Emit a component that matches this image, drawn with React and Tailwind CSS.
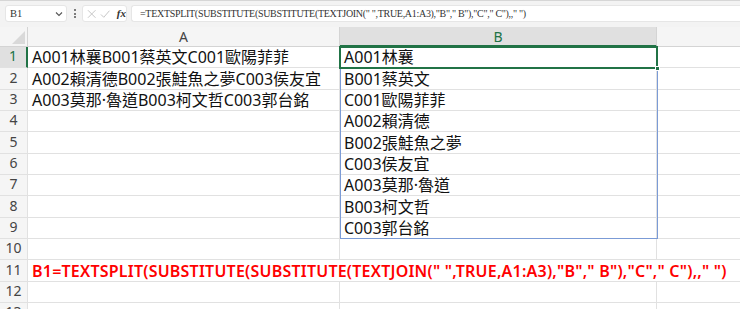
import React from "react";

const CJK = '"Noto Sans", "Noto Sans CJK TC", sans-serif';

const colA = [
  "A001林襄B001蔡英文C001歐陽菲菲",
  "A002賴清德B002張鮭魚之夢C003侯友宜",
  "A003莫那·魯道B003柯文哲C003郭台銘",
];
const colB = [
  "A001林襄",
  "B001蔡英文",
  "C001歐陽菲菲",
  "A002賴清德",
  "B002張鮭魚之夢",
  "C003侯友宜",
  "A003莫那·魯道",
  "B003柯文哲",
  "C003郭台銘",
];
const formula =
  '=TEXTSPLIT(SUBSTITUTE(SUBSTITUTE(TEXTJOIN(" ",TRUE,A1:A3),"B"," B"),"C"," C"),," ")';

function Row({ n }) {
  const sel = n === 1;
  const a = colA[n - 1] || "";
  const b = colB[n - 1] || "";
  if (n === 11) {
    return (
      <div className="flex h-[21.33px]">
        <div className="w-[28px] shrink-0 flex items-end justify-center pb-[1px] bg-[#f5f5f5] border-r border-b border-[#e1e1e1] text-[14px] text-[#444]">
          {n}
        </div>
        <div className="flex-1 flex items-end pl-[4px] border-b border-[#e1e1e1] text-[16px] leading-[20px] text-[#ff0000] font-semibold whitespace-nowrap tracking-[0.22px]">
          B1{formula}
        </div>
      </div>
    );
  }
  return (
    <div className="flex h-[21.33px]">
      <div
        className={
          sel
            ? "w-[28px] shrink-0 flex items-end justify-center pb-[1px] bg-[#e0e0e0] border-r-2 border-b border-r-[#217346] border-b-[#e1e1e1] text-[14px] text-[#217346]"
            : "w-[28px] shrink-0 flex items-end justify-center pb-[1px] bg-[#f5f5f5] border-r border-b border-[#e1e1e1] text-[14px] text-[#444]"
        }
      >
        {n}
      </div>
      <div className="w-[312px] shrink-0 flex items-end pl-[4px] border-r border-b border-[#e1e1e1] text-[16px] leading-[20px] text-[#111] whitespace-nowrap">
        {a}
      </div>
      <div className="w-[317px] shrink-0 flex items-end pl-[4px] border-r border-b border-[#e1e1e1] text-[16px] leading-[20px] text-[#111] whitespace-nowrap">
        {b}
      </div>
      <div className="flex-1 border-b border-[#e1e1e1]" />
    </div>
  );
}

export default function App() {
  return (
    <div
      className="w-[740px] h-[309px] overflow-hidden bg-white relative"
      style={{ fontFamily: CJK }}
    >
      {/* formula bar */}
      <div className="h-[27px] bg-[#f3f3f3] border-t border-[#d6d6d6] flex items-start pt-[4px] pl-[5px] gap-0">
        <div className="w-[62px] h-[17px] bg-white rounded-[3px] border border-[#e6e6e6] flex items-center justify-between pl-[4px] pr-[3px]">
          <span
            className="text-[10.5px] text-[#333]"
            style={{ fontFamily: '"Liberation Serif", serif' }}
          >
            B1
          </span>
          <svg width="8" height="6" viewBox="0 0 8 6">
            <path d="M1 1.5 L4 4.5 L7 1.5" stroke="#555" strokeWidth="1.1" fill="none" />
          </svg>
        </div>
        <div className="w-[15px] h-[17px] flex flex-col items-center justify-center gap-[1.5px]">
          <div className="w-[2px] h-[2px] rounded-full bg-[#555]" />
          <div className="w-[2px] h-[2px] rounded-full bg-[#555]" />
          <div className="w-[2px] h-[2px] rounded-full bg-[#555]" />
        </div>
        <div className="w-[45px] h-[17px] bg-white rounded-[3px] border border-[#e6e6e6] flex items-center pl-[4px] gap-[4px]">
          <svg width="10" height="10" viewBox="0 0 10 10">
            <path d="M1 1 L9 9 M9 1 L1 9" stroke="#c4c4c4" strokeWidth="1" />
          </svg>
          <svg width="11" height="10" viewBox="0 0 11 10">
            <path d="M1 5.5 L4 8.5 L10 1.5" stroke="#c4c4c4" strokeWidth="1" fill="none" />
          </svg>
          <span
            className="text-[11px] italic text-[#333] font-bold ml-[2px]"
            style={{ fontFamily: '"Liberation Serif", serif' }}
          >
            fx
          </span>
        </div>
        <div className="ml-[4px] flex-1 h-[17px] bg-white rounded-l-[3px] border border-r-0 border-[#e6e6e6] flex items-center pl-[8px]">
          <span
            className="text-[10px] text-[#333] whitespace-nowrap tracking-[-0.3px]"
            style={{ fontFamily: '"Liberation Serif", serif' }}
          >
            {formula}
          </span>
        </div>
      </div>

      {/* column headers */}
      <div className="flex h-[20px]">
        <div className="w-[28px] shrink-0 bg-[#f5f5f5] border-r border-b border-[#d4d4d4] flex items-end justify-end p-[2px]">
          <svg width="13" height="13" viewBox="0 0 13 13">
            <path d="M13 0 L13 13 L0 13 Z" fill="#d9d9d9" />
          </svg>
        </div>
        <div className="w-[312px] shrink-0 bg-[#f5f5f5] border-r border-b border-[#d4d4d4] flex items-center justify-center text-[14px] text-[#444]">
          A
        </div>
        <div className="w-[317px] shrink-0 bg-[#e0e0e0] border-r border-[#d4d4d4] border-b-2 border-b-[#217346] flex items-center justify-center text-[14px] text-[#217346]">
          B
        </div>
        <div className="flex-1 bg-[#f5f5f5] border-b border-[#d4d4d4]" />
      </div>

      {/* rows */}
      <div className="relative">
        {Array.from({ length: 13 }, (_, i) => (
          <Row key={i} n={i + 1} />
        ))}
        {/* spill range border */}
        <div className="absolute left-[340px] top-0 w-[318px] h-[192px] border border-[#7b9bd6] pointer-events-none" />
        {/* active cell */}
        <div className="absolute left-[339px] top-[-1px] w-[319px] h-[23px] border-2 border-[#217346] pointer-events-none" />
        <div className="absolute left-[655px] top-[19px] w-[5px] h-[5px] bg-[#217346] border border-white pointer-events-none" />
      </div>
    </div>
  );
}
